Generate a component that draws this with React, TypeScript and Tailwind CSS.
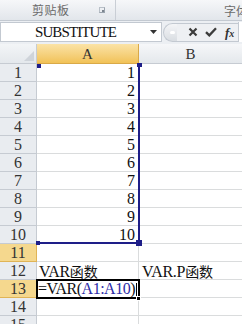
import React from 'react';

const rows = Array.from({ length: 15 }, (_, i) => i + 1);

function RowHead({ n }: { n: number }) {
  const hot = n === 11 || n === 13;
  return (
    <div
      className={`h-[18px] border-b border-r text-center text-[16px] leading-[18px] text-[#333] font-['Liberation_Serif',serif] ${
        hot ? 'bg-[#f5d88e] border-[#e0b456]' : 'bg-[#e9ecf0] border-[#c6cbd2]'
      }`}
    >
      {n}
    </div>
  );
}

export default function App() {
  return (
    <div className="w-[242px] h-[324px] overflow-hidden bg-[#eceff3] select-none">
      {/* ribbon group labels */}
      <div className="h-[21px] flex items-center bg-gradient-to-b from-[#f6f7f9] to-[#e2e6eb] border-b border-[#c3c9d1]">
        <div className="w-[116px] h-full flex items-center border-r border-[#c9ced5] relative">
          <span className="ml-[32px] text-[12px] text-[#6b6b6b] tracking-[0.5px] font-['Noto_Sans_CJK_SC',sans-serif]">剪贴板</span>
          <span className="ml-auto mr-[10px] w-[6px] h-[6px] border border-[#9aa3ad] border-t-[#b8bfc7] border-l-[#b8bfc7] relative">
            <span className="absolute right-[0px] bottom-[0px] w-[2px] h-[2px] bg-[#7c8590]" />
          </span>
        </div>
        <div className="flex-1 text-right overflow-hidden whitespace-nowrap">
          <span className="inline-block translate-x-[6px] text-[12px] text-[#6b6b6b] font-['Noto_Sans_CJK_SC',sans-serif]">字体</span>
        </div>
      </div>

      {/* formula bar */}
      <div className="mt-[1px] h-[20px] flex items-stretch">
        <div className="w-[162px] bg-white border border-[#c3c9d1] flex items-center">
          <span className="ml-[34px] text-[15px] tracking-[-0.9px] text-[#111] font-['Liberation_Serif',serif]">SUBSTITUTE</span>
          <svg className="ml-auto mr-[4px]" width="7" height="4" viewBox="0 0 7 4">
            <path d="M0 0H7L3.5 4Z" fill="#333" />
          </svg>
        </div>
        <div className="flex-1 flex items-center">
          <div className="w-[14px] h-[19px] ml-[1px] rounded-l-full bg-gradient-to-b from-[#f4f5f7] to-[#d9dde2] border border-r-0 border-[#c3c9d1] flex items-center justify-end">
            <span className="w-[5px] h-[3px] rounded-full bg-[#fff] mr-[2px]" />
          </div>
          <div className="flex-1 h-[19px] flex items-center bg-[#eef0f3] border-y border-[#c3c9d1]">
            <svg className="ml-[11px]" width="10" height="10" viewBox="0 0 10 10">
              <path d="M1.5 1.5L8.5 8.5M8.5 1.5L1.5 8.5" stroke="#3c3c3c" strokeWidth="2.2" />
            </svg>
            <svg className="ml-[7px]" width="12" height="10" viewBox="0 0 12 10">
              <path d="M1 5.2L4.3 8.4L11 1.2" stroke="#3c3c3c" strokeWidth="2.3" fill="none" />
            </svg>
            <span className="ml-[8px] text-[13px] italic font-bold text-[#333] leading-none font-['Liberation_Serif',serif]">
              f<span className="text-[10px]">x</span>
            </span>
          </div>
          <div className="w-[4px] h-[20px] bg-white border-l border-[#c3c9d1]" />
        </div>
      </div>

      {/* sheet */}
      <div className="mt-[2px] relative grid grid-cols-[37px_102px_1fr] bg-white">
        {/* column headers */}
        <div className="h-[20px] bg-gradient-to-b from-[#f3f5f7] to-[#e4e8ec] border-b border-r border-[#c6cbd2] relative">
          <svg className="absolute right-[2px] bottom-[2px]" width="10" height="10" viewBox="0 0 10 10">
            <path d="M10 0V10H0Z" fill="#cfd4da" />
          </svg>
        </div>
        <div className="h-[20px] bg-gradient-to-b from-[#fbe3a6] to-[#f1c256] border-b border-r border-[#d9a948] text-center text-[15px] leading-[20px] text-[#333] font-['Liberation_Serif',serif]">
          A
        </div>
        <div className="h-[20px] bg-gradient-to-b from-[#f6f7f9] to-[#e4e8ec] border-b border-[#c6cbd2] text-center text-[15px] leading-[20px] text-[#333] font-['Liberation_Serif',serif]">
          B
        </div>

        {rows.map((n) => (
          <React.Fragment key={n}>
            <RowHead n={n} />
            <div className="h-[18px] border-b border-r border-[#dadcdd] text-[16px] leading-[18px] text-[#111] whitespace-nowrap px-[3px] text-right font-['Liberation_Serif',serif]">
              {n <= 10 ? n : ''}
              {n === 12 && (
                <span className="block text-left -ml-[1px] tracking-[-0.3px]">
                  VAR<span className="text-[14px] tracking-normal font-['Noto_Sans_CJK_SC',sans-serif]">函数</span>
                </span>
              )}
              {n === 13 && (
                <span className="block text-left -ml-[2px] tracking-[-0.5px]">
                  =VAR(<span className="text-[#2c2ca8]">A1:A10</span>)<span className="inline-block w-[1px] h-[15px] bg-black align-middle ml-[1px]" />
                </span>
              )}
            </div>
            <div className="h-[18px] border-b border-[#dadcdd] text-[16px] leading-[18px] tracking-[-0.3px] text-[#111] whitespace-nowrap px-[3px] font-['Liberation_Serif',serif]">
              {n === 12 && (
                <>
                  VAR.P<span className="text-[14px] tracking-normal font-['Noto_Sans_CJK_SC',sans-serif]">函数</span>
                </>
              )}
            </div>
          </React.Fragment>
        ))}

        {/* reference range A1:A10 */}
        <div className="absolute left-[138px] top-[21px] w-[2px] h-[179px] bg-[#1e1e88]" />
        <div className="absolute left-[38px] top-[198px] w-[101px] h-[2px] bg-[#1e1e88]" />
        <div className="absolute left-[37px] top-[20px] w-[4px] h-[4px] bg-[#1e1e88]" />
        <div className="absolute left-[137px] top-[19px] w-[5px] h-[4px] bg-[#1e1e88]" />
        <div className="absolute left-[36px] top-[197px] w-[4px] h-[4px] bg-[#1e1e88]" />
        <div className="absolute left-[136px] top-[196px] w-[6px] h-[6px] bg-[#1e1e88]" />

        {/* active cell A13 */}
        <div className="absolute left-[36px] top-[235px] w-[104px] h-[20px] border-2 border-black pointer-events-none" />
        <div className="absolute left-[136px] top-[252px] w-[5px] h-[5px] bg-black border border-white" />
      </div>
    </div>
  );
}
